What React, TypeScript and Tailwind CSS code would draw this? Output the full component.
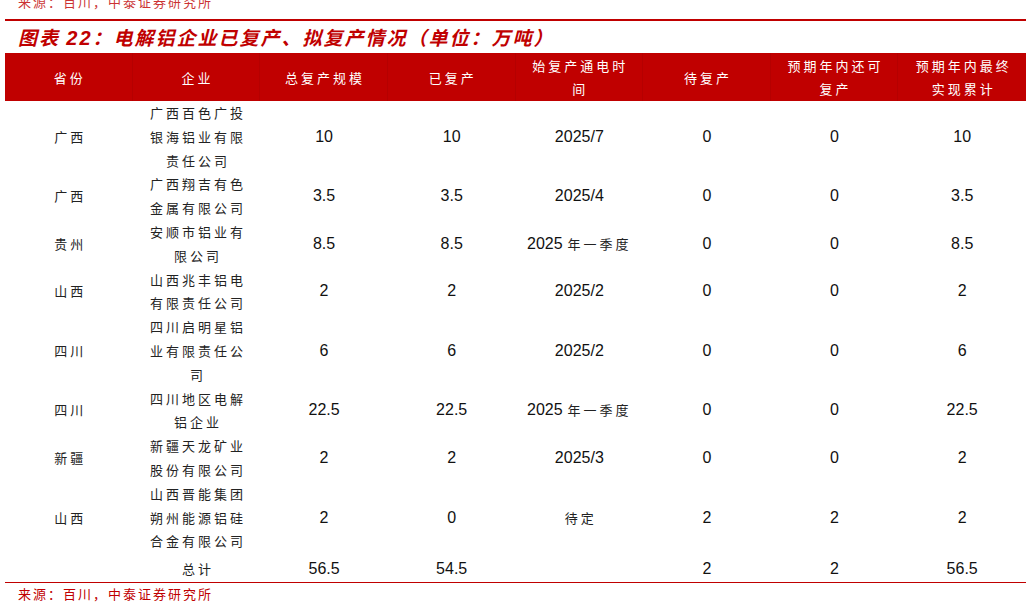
const RED = "text-[#c00000]"

const headers = [
  ["省份"],
  ["企业"],
  ["总复产规模"],
  ["已复产"],
  ["始复产通电时", "间"],
  ["待复产"],
  ["预期年内还可", "复产"],
  ["预期年内最终", "实现累计"],
]

type Row = {
  province: string
  company: string[]
  total: string
  done: string
  date: string
  pending: string
  more: string
  final: string
}

const rows: Row[] = [
  { province: "广西", company: ["广西百色广投", "银海铝业有限", "责任公司"], total: "10", done: "10", date: "2025/7", pending: "0", more: "0", final: "10" },
  { province: "广西", company: ["广西翔吉有色", "金属有限公司"], total: "3.5", done: "3.5", date: "2025/4", pending: "0", more: "0", final: "3.5" },
  { province: "贵州", company: ["安顺市铝业有", "限公司"], total: "8.5", done: "8.5", date: "2025 年一季度", pending: "0", more: "0", final: "8.5" },
  { province: "山西", company: ["山西兆丰铝电", "有限责任公司"], total: "2", done: "2", date: "2025/2", pending: "0", more: "0", final: "2" },
  { province: "四川", company: ["四川启明星铝", "业有限责任公", "司"], total: "6", done: "6", date: "2025/2", pending: "0", more: "0", final: "6" },
  { province: "四川", company: ["四川地区电解", "铝企业"], total: "22.5", done: "22.5", date: "2025 年一季度", pending: "0", more: "0", final: "22.5" },
  { province: "新疆", company: ["新疆天龙矿业", "股份有限公司"], total: "2", done: "2", date: "2025/3", pending: "0", more: "0", final: "2" },
  { province: "山西", company: ["山西晋能集团", "朔州能源铝硅", "合金有限公司"], total: "2", done: "0", date: "待定", pending: "2", more: "2", final: "2" },
]

const cjk = "[font-family:'Noto_Sans_CJK_SC',sans-serif] text-[13px] tracking-[3px] pl-[3px]"
const num = "[font-family:'Liberation_Sans','Noto_Sans_CJK_SC',sans-serif] text-[16px]"

function DateCell({ value }: { value: string }) {
  if (value === "待定") return <span className={`${cjk} text-[#222]`}>{value}</span>
  const m = value.match(/^(\d+) (.+)$/)
  if (m) {
    return (
      <span className="flex items-baseline">
        <span className={num}>{m[1]}</span>
        <span className={`${cjk} ml-[2px] text-[#222]`}>{m[2]}</span>
      </span>
    )
  }
  return <span className={num}>{value}</span>
}

export default function App() {
  return (
    <div className="w-[1031px] h-[607px] overflow-hidden bg-white">
      <div className="h-[12px] overflow-hidden">
        <div className={`-mt-[10px] pl-[18px] h-[24px] leading-[24px] ${RED} [font-family:'Noto_Sans_CJK_SC',sans-serif] text-[13px] tracking-[2px] opacity-80`}>
          来源：百川，中泰证券研究所
        </div>
      </div>
      <div className="mt-[7px] mx-[5px] h-[2px] bg-[#c00000]" />
      <div className={`mt-[2px] pl-[18px] h-[30px] leading-[28px] ${RED} font-bold italic text-[19px] tracking-[2px] [font-family:'Noto_Sans_CJK_SC',sans-serif]`}>
        图表 <span className="[font-family:'Liberation_Sans',sans-serif] text-[20px]">22</span>：电解铝企业已复产、拟复产情况（单位：万吨）
      </div>
      <div className="mx-[5px]">
        <div className="grid grid-cols-8 h-[48px] bg-[#c00000]">
          {headers.map((h, i) => (
            <div
              key={i}
              className={`flex flex-col items-center justify-center text-white ${cjk} leading-[23px] ${i < 7 ? "border-r border-[#b50000]" : ""}`}
            >
              {h.map((l) => (
                <span key={l}>{l}</span>
              ))}
            </div>
          ))}
        </div>
        {rows.map((r, i) => (
          <div key={i} className="grid grid-cols-8 items-center text-[#111] leading-[23.8px]">
            <div className={`text-center ${cjk} text-[#222]`}>{r.province}</div>
            <div className={`flex flex-col items-center ${cjk} leading-[23.8px] text-[#222]`}>
              {r.company.map((l) => (
                <span key={l}>{l}</span>
              ))}
            </div>
            <div className={`text-center ${num}`}>{r.total}</div>
            <div className={`text-center ${num}`}>{r.done}</div>
            <div className="flex justify-center">
              <DateCell value={r.date} />
            </div>
            <div className={`text-center ${num}`}>{r.pending}</div>
            <div className={`text-center ${num}`}>{r.more}</div>
            <div className={`text-center ${num}`}>{r.final}</div>
          </div>
        ))}
        <div className="grid grid-cols-8 items-center h-[29px] pt-[2px] text-[#111]">
          <div />
          <div className={`text-center ${cjk} text-[#222]`}>总计</div>
          <div className={`text-center ${num}`}>56.5</div>
          <div className={`text-center ${num}`}>54.5</div>
          <div />
          <div className={`text-center ${num}`}>2</div>
          <div className={`text-center ${num}`}>2</div>
          <div className={`text-center ${num}`}>56.5</div>
        </div>
        <div className="h-px bg-[#c00000]" />
      </div>
      <div className={`pl-[18px] h-[22px] leading-[22px] ${RED} [font-family:'Noto_Sans_CJK_SC',sans-serif] text-[13px] tracking-[2px]`}>
        来源：百川，中泰证券研究所
      </div>
    </div>
  )
}
